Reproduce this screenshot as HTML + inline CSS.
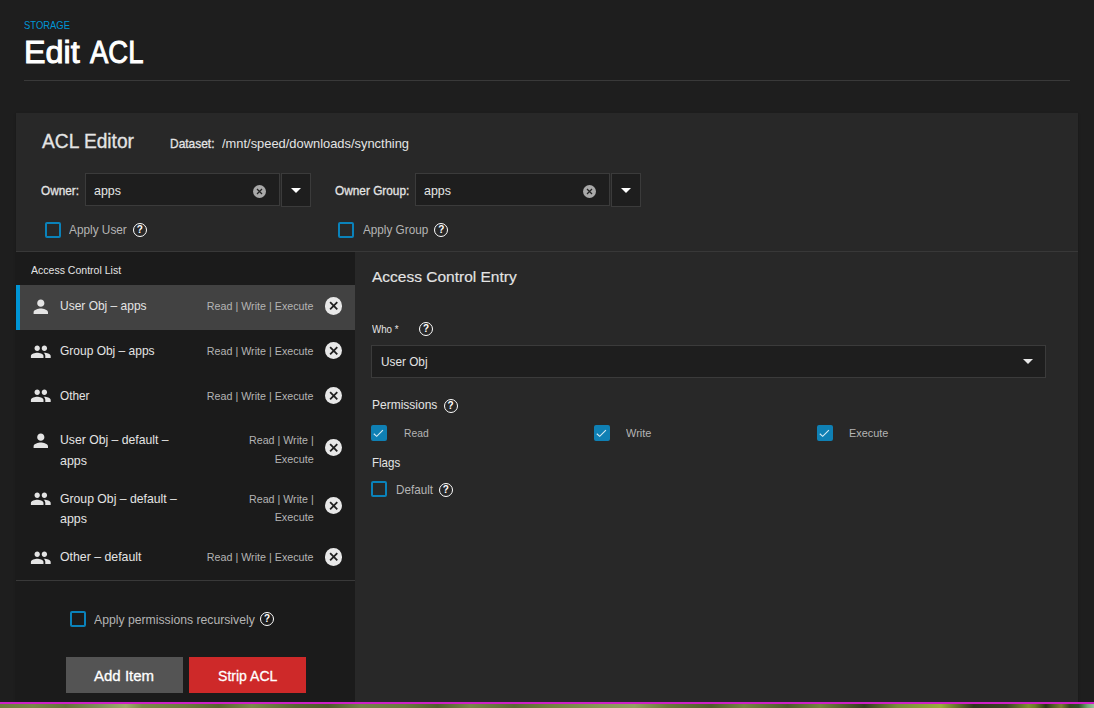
<!DOCTYPE html>
<html lang="en"><head>
<meta charset="utf-8">
<title>Edit ACL</title>
<style>
  html, body { margin: 0; padding: 0; }
  body {
    width: 1094px; height: 708px; overflow: hidden; position: relative;
    background: #1e1e1e; color: #e4e4e4;
    font-family: "Liberation Sans", sans-serif; font-size: 13px;
  }
  * { box-sizing: border-box; }
  .abs { position: absolute; }
  .t { position: absolute; white-space: nowrap; line-height: 20px; transform-origin: 0 50%; }
  .med { -webkit-text-stroke: 0.3px currentColor; }
  .med2 { -webkit-text-stroke: 0.15px currentColor; }
  .dim { color: #b4b4b4; }

  /* page header */
  .breadcrumb { left: 24px; top: 15px; font-size: 11px; color: #0095d5; }
  h1.t { margin: 0; color: #fff; left: 24px; top: 31.8px; font-size: 32px; line-height: 40px; font-weight: normal; -webkit-text-stroke: 1px #fff; }
  h1.t span { display: inline-block; transform-origin: 0 50%; }
  .rule { left: 24px; top: 80px; width: 1046px; height: 1px; background: #393939; }

  /* card */
  .card { left: 16px; top: 113px; width: 1062px; height: 589px; background: #282828;
          box-shadow: 0 2px 1px -1px rgba(0,0,0,.2), 0 1px 1px 0 rgba(0,0,0,.14), 0 1px 3px 0 rgba(0,0,0,.12); }
  .card-top { left: 0; top: 0; width: 1062px; height: 139px; border-bottom: 1px solid #383838; }
  .field { background: #1e1e1e; border: 1px solid #3b3b3b; }
  .clear { width: 13px; height: 13px; border-radius: 50%; background: #a9a9a9; }
  .clear svg, .cancel svg { position: absolute; left: 0; top: 0; width: 100%; height: 100%; }
  .tri { width: 0; height: 0; border-left: 5.5px solid transparent; border-right: 5.5px solid transparent; border-top: 5.5px solid #fff; }
  .cb { width: 16px; height: 16px; border: 2px solid #0a82ba; border-radius: 2px; }
  .cb.on { background: #0f80b4; border-color: #0f80b4; }
  .cb.on svg { position: absolute; left: -2px; top: -2px; width: 16px; height: 16px; }
  .help { width: 14px; height: 14px; border: 1.7px solid #fff; border-radius: 50%; color: #fff;
          font-size: 10px; font-weight: bold; line-height: 11.6px; text-align: center; }

  /* list */
  .list { left: 0; top: 139px; width: 339px; height: 450px; background: #1b1b1b; }
  .row { left: 0; width: 339px; }
  .row.sel { background: #424242; box-shadow: inset 4px 0 0 #0095d5; }
  .ico { fill: #e4e4e4; }
  .cancel { width: 17.4px; height: 17.4px; border-radius: 50%; background: #e8e8e8; }
  .perm { font-size: 11px; color: #b4b4b4; text-align: right; transform-origin: 100% 50%; }
  .divider { left: 0; top: 328px; width: 339px; height: 1px; background: #393939; }
  .btn { height: 36px; color: #fff; font: inherit; font-size: 15px; border: 0; padding: 0; margin: 0; border-radius: 0; display: block; }

  /* bottom strip */
  .mag { left: 0; top: 702px; width: 1094px; height: 2px; background: #cd20c7; }
  .photo { left: 0; top: 704px; width: 1094px; height: 4px;
    background: linear-gradient(90deg,#6f7c3e 0%,#7a8748 3%,#66733a 6%,#80905a 9%,#a0ad6c 11.5%,#7c8a4a 13%,#6e7a3e 17%,#59652f 20%,#7d8a4c 23%,#5a6633 27%,#4f5a2c 30%,#76834a 33%,#6c793f 37%,#525e2e 40%,#7a874a 43%,#5c6834 47%,#72803f 50%,#8a9858 55%,#94a062 58%,#6d7a3c 61%,#505c2c 65%,#788644 68%,#4e5a2b 72%,#76853f 75%,#343b20 79%,#7a8c3a 82%,#9aae3c 86%,#2f351e 89%,#3b4424 92%,#7f9030 94%,#6e7c28 94.6%,#2a3416 95.6%,#4d5a22 96.2%,#7b7c34 97%,#33451f 97.8%,#2f5228 98.6%,#6fa870 99.4%,#9cc09a 100%); }
  section, header, ul, li, label, form { display: block; margin: 0; padding: 0; list-style: none; }
  .grp { position: absolute; width: 0; height: 0; }
  h2.t, h3.t { margin: 0; font-weight: normal; font-size: 13px; }
</style>
</head>
<body>
<header class="abs" style="left:0px;top:0px;width:1094px;height:100px">
  <div class="t breadcrumb" style="left: 24px; top: 15px; transform: scaleX(0.8583);">STORAGE</div>
  <h1 class="t"><span style="transform: scaleX(1.0083);">Edit</span><span class="abs" style="left: 66.4px; top: 0px; transform: scaleX(0.8578);">ACL</span></h1>
  <div class="abs rule"></div>
</header>
<section class="abs card" style="left:16px;top:113px">
  <div class="abs card-top" style="left:0px;top:0px">
    <h2 class="t med" style="left: 26px; top: 18.4px; font-size: 20px; transform: scaleX(0.9586);">ACL Editor</h2>
    <span class="t med" style="left: 154.2px; top: 20.8px; transform: scaleX(0.919);">Dataset:</span>
    <span class="t" style="left: 206px; top: 20.8px; transform: scaleX(0.9914);">/mnt/speed/downloads/syncthing</span>
    <label class="t med" style="left: 25.3px; top: 68.3px; transform: scaleX(0.9068);">Owner:</label>
    <div class="abs field" style="left:69px;top:60px;width:195px;height:33px">
      <span class="t" style="left: 8.4px; top: 7.3px; transform: scaleX(0.9573);">apps</span>
      <span class="abs clear" style="left:167px;top:11.2px"><svg viewBox="0 0 13 13"><path d="M4 4l5 5M9 4l-5 5" stroke="#242424" stroke-width="1.25" fill="none"></path></svg></span>
    </div>
    <div class="abs field" style="left:265px;top:60px;width:30px;height:34px">
      <span class="abs tri" style="left:8.9px;top:13.8px"></span>
    </div>
    <label class="grp" style="left:29px;top:109px">
      <span class="abs cb" style="left:0px;top:0px"></span>
      <span class="t dim" style="left: 24.3px; top: -2.3px; transform: scaleX(0.9091);">Apply User</span>
      <span class="abs help" style="left:87.8px;top:0.7px">?</span>
    </label>
    <label class="t med" style="left: 318.6px; top: 68.3px; transform: scaleX(0.9099);">Owner Group:</label>
    <div class="abs field" style="left:399px;top:60px;width:195px;height:33px">
      <span class="t" style="left: 8.4px; top: 7.3px; transform: scaleX(0.9573);">apps</span>
      <span class="abs clear" style="left:167px;top:11.2px"><svg viewBox="0 0 13 13"><path d="M4 4l5 5M9 4l-5 5" stroke="#242424" stroke-width="1.25" fill="none"></path></svg></span>
    </div>
    <div class="abs field" style="left:595px;top:60px;width:30px;height:34px">
      <span class="abs tri" style="left:8.9px;top:13.8px"></span>
    </div>
    <label class="grp" style="left:322px;top:109px">
      <span class="abs cb" style="left:0px;top:0px"></span>
      <span class="t dim" style="left: 24.9px; top: -2.3px; transform: scaleX(0.9022);">Apply Group</span>
      <span class="abs help" style="left:96.2px;top:1px">?</span>
    </label>
  </div>
  <div class="abs list" style="left:0px;top:139px">
    <h3 class="t" style="left: 15.4px; top: 7.5px; font-size: 11px; transform: scaleX(0.9569);">Access Control List</h3>
    <ul class="abs" style="left:0px;top:33px;width:339px;height:296px">
      <li class="abs row sel" style="left:0px;top:0px;height:45px">
        <svg class="abs ico" style="left:13.8px;top:10.6px;width:21.6px;height:21.6px" viewBox="0 0 24 24"><path d="M12 12c2.21 0 4-1.79 4-4s-1.79-4-4-4-4 1.79-4 4 1.79 4 4 4zm0 2c-2.67 0-8 1.34-8 4v2h16v-2c0-2.66-5.33-4-8-4z"></path></svg>
        <span class="t" style="left: 44.2px; top: 11.1px; transform: scaleX(0.9219);">User Obj – apps</span>
        <span class="t perm" style="right: 41.7px; top: 10.8px; transform: scaleX(0.9739);">Read | Write | Execute</span>
        <span class="abs cancel" style="left:308.8px;top:12.2px"><svg viewBox="0 0 17 17"><path d="M5 5l7 7M12 5l-7 7" stroke="#202020" stroke-width="1.75" fill="none"></path></svg></span>
      </li>
      <li class="abs row" style="left:0px;top:45px;height:45px">
        <svg class="abs ico" style="left:13.8px;top:10.6px;width:21.6px;height:21.6px" viewBox="0 0 24 24"><path d="M16 11c1.66 0 2.99-1.34 2.99-3S17.66 5 16 5c-1.66 0-3 1.34-3 3s1.34 3 3 3zm-8 0c1.66 0 2.99-1.34 2.99-3S9.66 5 8 5C6.34 5 5 6.34 5 8s1.34 3 3 3zm0 2c-2.33 0-7 1.17-7 3.5V19h14v-2.5c0-2.33-4.67-3.5-7-3.5zm8 0c-.29 0-.62.02-.97.05 1.16.84 1.97 1.97 1.97 3.45V19h6v-2.5c0-2.33-4.67-3.5-7-3.5z"></path></svg>
        <span class="t" style="left: 44.2px; top: 11.1px; transform: scaleX(0.9218);">Group Obj – apps</span>
        <span class="t perm" style="right: 41.7px; top: 10.8px; transform: scaleX(0.9739);">Read | Write | Execute</span>
        <span class="abs cancel" style="left:308.8px;top:12px"><svg viewBox="0 0 17 17"><path d="M5 5l7 7M12 5l-7 7" stroke="#202020" stroke-width="1.75" fill="none"></path></svg></span>
      </li>
      <li class="abs row" style="left:0px;top:90px;height:45px">
        <svg class="abs ico" style="left:13.8px;top:9.9px;width:21.6px;height:21.6px" viewBox="0 0 24 24"><path d="M16 11c1.66 0 2.99-1.34 2.99-3S17.66 5 16 5c-1.66 0-3 1.34-3 3s1.34 3 3 3zm-8 0c1.66 0 2.99-1.34 2.99-3S9.66 5 8 5C6.34 5 5 6.34 5 8s1.34 3 3 3zm0 2c-2.33 0-7 1.17-7 3.5V19h14v-2.5c0-2.33-4.67-3.5-7-3.5zm8 0c-.29 0-.62.02-.97.05 1.16.84 1.97 1.97 1.97 3.45V19h6v-2.5c0-2.33-4.67-3.5-7-3.5z"></path></svg>
        <span class="t" style="left: 44.2px; top: 11.1px; transform: scaleX(0.9073);">Other</span>
        <span class="t perm" style="right: 41.7px; top: 10.8px; transform: scaleX(0.9739);">Read | Write | Execute</span>
        <span class="abs cancel" style="left:308.8px;top:12px"><svg viewBox="0 0 17 17"><path d="M5 5l7 7M12 5l-7 7" stroke="#202020" stroke-width="1.75" fill="none"></path></svg></span>
      </li>
      <li class="abs row" style="left:0px;top:135px;height:58px">
        <svg class="abs ico" style="left:13.8px;top:9.9px;width:21.6px;height:21.6px" viewBox="0 0 24 24"><path d="M12 12c2.21 0 4-1.79 4-4s-1.79-4-4-4-4 1.79-4 4 1.79 4 4 4zm0 2c-2.67 0-8 1.34-8 4v2h16v-2c0-2.66-5.33-4-8-4z"></path></svg>
        <span class="t" style="left: 44.2px; top: 10.4px; transform: scaleX(0.9384);">User Obj – default –</span>
        <span class="t" style="left: 44.2px; top: 31.2px; transform: scaleX(0.9573);">apps</span>
        <span class="t perm" style="right: 41.7px; top: 10.1px; transform: scaleX(0.9692);">Read | Write |</span>
        <span class="t perm" style="right: 41.7px; top: 28.7px; transform: scaleX(0.9836);">Execute</span>
        <span class="abs cancel" style="left:308.8px;top:18.6px"><svg viewBox="0 0 17 17"><path d="M5 5l7 7M12 5l-7 7" stroke="#202020" stroke-width="1.75" fill="none"></path></svg></span>
      </li>
      <li class="abs row" style="left:0px;top:193px;height:58px">
        <svg class="abs ico" style="left:13.8px;top:10.4px;width:21.6px;height:21.6px" viewBox="0 0 24 24"><path d="M16 11c1.66 0 2.99-1.34 2.99-3S17.66 5 16 5c-1.66 0-3 1.34-3 3s1.34 3 3 3zm-8 0c1.66 0 2.99-1.34 2.99-3S9.66 5 8 5C6.34 5 5 6.34 5 8s1.34 3 3 3zm0 2c-2.33 0-7 1.17-7 3.5V19h14v-2.5c0-2.33-4.67-3.5-7-3.5zm8 0c-.29 0-.62.02-.97.05 1.16.84 1.97 1.97 1.97 3.45V19h6v-2.5c0-2.33-4.67-3.5-7-3.5z"></path></svg>
        <span class="t" style="left: 44.2px; top: 10.9px; transform: scaleX(0.9396);">Group Obj – default –</span>
        <span class="t" style="left: 44.2px; top: 30.7px; transform: scaleX(0.9573);">apps</span>
        <span class="t perm" style="right: 41.7px; top: 10.6px; transform: scaleX(0.9692);">Read | Write |</span>
        <span class="t perm" style="right: 41.7px; top: 29.2px; transform: scaleX(0.9836);">Execute</span>
        <span class="abs cancel" style="left:308.8px;top:18.6px"><svg viewBox="0 0 17 17"><path d="M5 5l7 7M12 5l-7 7" stroke="#202020" stroke-width="1.75" fill="none"></path></svg></span>
      </li>
      <li class="abs row" style="left:0px;top:251px;height:45px">
        <svg class="abs ico" style="left:13.8px;top:10.6px;width:21.6px;height:21.6px" viewBox="0 0 24 24"><path d="M16 11c1.66 0 2.99-1.34 2.99-3S17.66 5 16 5c-1.66 0-3 1.34-3 3s1.34 3 3 3zm-8 0c1.66 0 2.99-1.34 2.99-3S9.66 5 8 5C6.34 5 5 6.34 5 8s1.34 3 3 3zm0 2c-2.33 0-7 1.17-7 3.5V19h14v-2.5c0-2.33-4.67-3.5-7-3.5zm8 0c-.29 0-.62.02-.97.05 1.16.84 1.97 1.97 1.97 3.45V19h6v-2.5c0-2.33-4.67-3.5-7-3.5z"></path></svg>
        <span class="t" style="left: 44.2px; top: 11.1px; transform: scaleX(0.9465);">Other – default</span>
        <span class="t perm" style="right: 41.7px; top: 10.8px; transform: scaleX(0.9739);">Read | Write | Execute</span>
        <span class="abs cancel" style="left:308.8px;top:12.4px"><svg viewBox="0 0 17 17"><path d="M5 5l7 7M12 5l-7 7" stroke="#202020" stroke-width="1.75" fill="none"></path></svg></span>
      </li>
    </ul>
    <div class="abs divider"></div>
    <label class="grp" style="left:54px;top:359px">
      <span class="abs cb" style="left:0px;top:0px"></span>
      <span class="t dim" style="left: 24px; top: -1.5px; transform: scaleX(0.9391);">Apply permissions recursively</span>
      <span class="abs help" style="left:190px;top:1.4px">?</span>
    </label>
    <button class="abs btn" style="left:50px;top:405px;width:117px;background:#545454">
      <span class="t med" style="left: 28.3px; top: 8.7px; color: rgb(255, 255, 255); transform: scaleX(1.0011);">Add Item</span>
    </button>
    <button class="abs btn" style="left:173px;top:405px;width:117px;background:#ce2929">
      <span class="t med" style="left: 28.6px; top: 8.7px; color: rgb(255, 255, 255); transform: scaleX(0.9373);">Strip ACL</span>
    </button>
  </div>
  <form class="abs" style="left:339px;top:139px;width:723px;height:450px">
    <h3 class="t med2" style="left: 17.1px; top: 14.7px; font-size: 15px; transform: scaleX(1.0332);">Access Control Entry</h3>
    <label class="t" style="left: 17px; top: 67.2px; font-size: 11px; transform: scaleX(0.8843);">Who *</label>
    <span class="abs help" style="left:64.1px;top:69.6px">?</span>
    <div class="abs field" style="left:16px;top:93px;width:675px;height:33px">
      <span class="t" style="left: 8.6px; top: 6.3px; transform: scaleX(0.9065);">User Obj</span>
      <span class="abs tri" style="left:650.6px;top:12.7px;border-top-color:#e8e8e8"></span>
    </div>
    <label class="t" style="left: 17.1px; top: 143.3px; transform: scaleX(0.9224);">Permissions</label>
    <span class="abs help" style="left:88.6px;top:147.4px">?</span>
    <label class="grp" style="left:16px;top:173px">
      <span class="abs cb on" style="left:0px;top:0px"><svg viewBox="0 0 24 24"><path d="M4.2 13.2L8.55 17 17.85 7.65" stroke="#d6eaf4" stroke-width="1.7" fill="none"></path></svg></span>
      <span class="t dim" style="left: 32.9px; top: -1.8px; font-size: 11px; transform: scaleX(0.9355);">Read</span>
    </label>
    <label class="grp" style="left:239px;top:173px">
      <span class="abs cb on" style="left:0px;top:0px"><svg viewBox="0 0 24 24"><path d="M4.2 13.2L8.55 17 17.85 7.65" stroke="#d6eaf4" stroke-width="1.7" fill="none"></path></svg></span>
      <span class="t dim" style="left: 32.3px; top: -1.8px; font-size: 11px; transform: scaleX(0.9973);">Write</span>
    </label>
    <label class="grp" style="left:462px;top:173px">
      <span class="abs cb on" style="left:0px;top:0px"><svg viewBox="0 0 24 24"><path d="M4.2 13.2L8.55 17 17.85 7.65" stroke="#d6eaf4" stroke-width="1.7" fill="none"></path></svg></span>
      <span class="t dim" style="left: 31.7px; top: -1.8px; font-size: 11px; transform: scaleX(0.9887);">Execute</span>
    </label>
    <label class="t" style="left: 17.1px; top: 201.4px; transform: scaleX(0.8869);">Flags</label>
    <label class="grp" style="left:16px;top:229px">
      <span class="abs cb" style="left:0px;top:0px"></span>
      <span class="t dim" style="left: 25px; top: -0.7px; transform: scaleX(0.898);">Default</span>
      <span class="abs help" style="left:67.9px;top:1.6px">?</span>
    </label>
  </form>
</section>
<div class="abs mag"></div>
<div class="abs photo"></div>


</body></html>
